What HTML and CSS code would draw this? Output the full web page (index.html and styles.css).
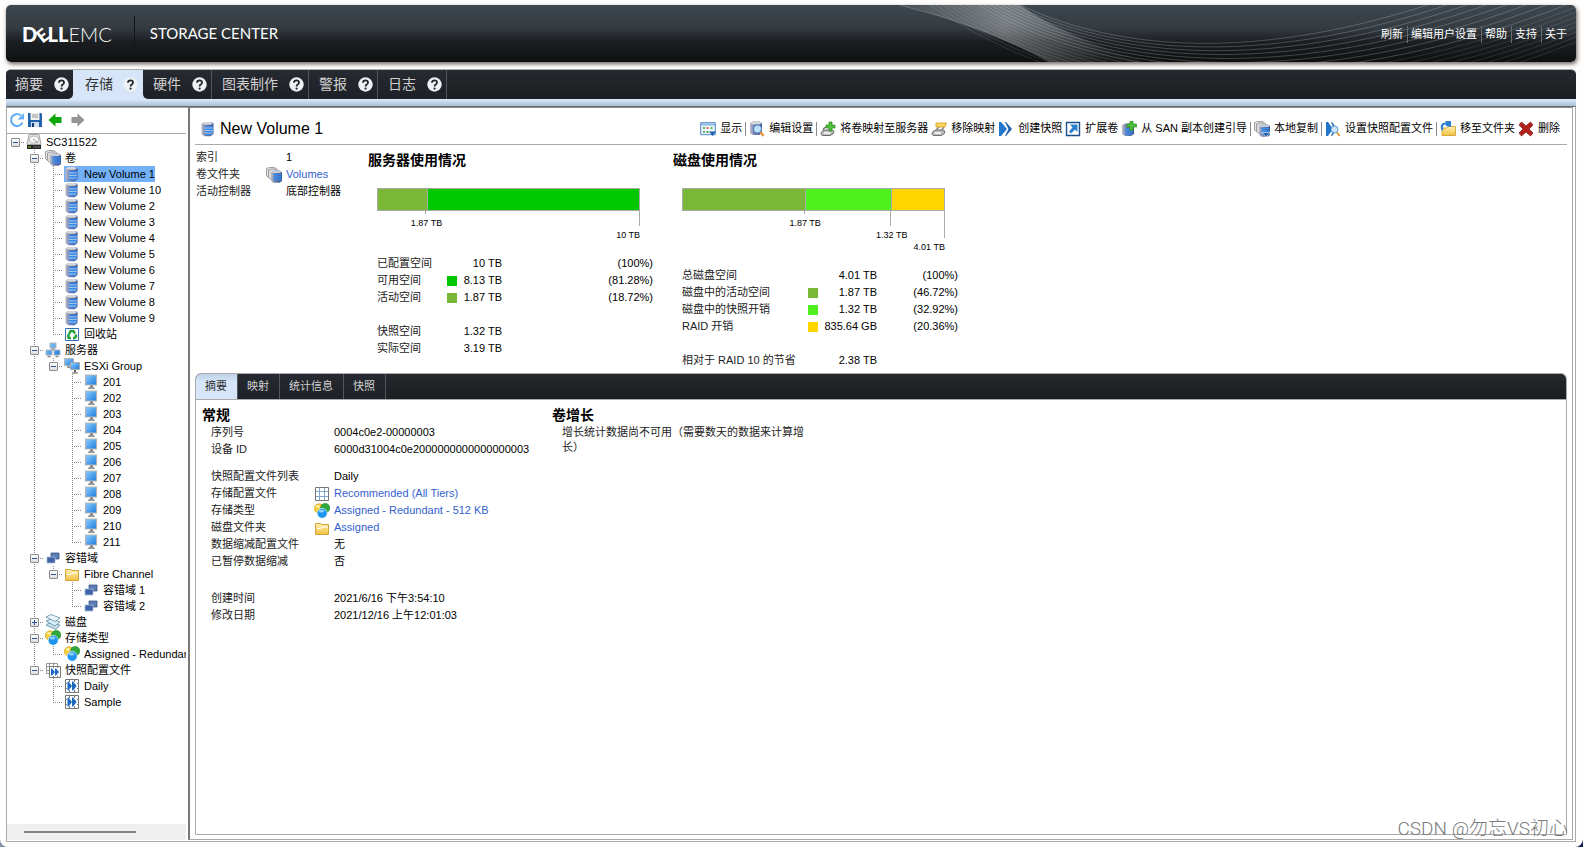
FILE: index.html
```html
<!DOCTYPE html>
<html lang="zh-CN">
<head>
    <meta charset="UTF-8">
    <meta name="viewport" content="width=device-width, initial-scale=1.0">
    <title>Storage Center</title>
    <link rel="stylesheet" href="styles.css">
</head>
<body>

<!-- icons -->
<svg class="sprite" width="0" height="0" aria-hidden="true">
    <defs>
        <linearGradient id="gBlue" x1="0" y1="0" x2="1" y2="1">
            <stop offset="0" stop-color="#8fd0ff"/>
            <stop offset="1" stop-color="#1c7ae0"/>
        </linearGradient>
        <linearGradient id="gSide" x1="0" y1="0" x2="1" y2="0">
            <stop offset="0" stop-color="#b9bccb"/>
            <stop offset="0.4" stop-color="#6f7ba8"/>
            <stop offset="1" stop-color="#3d4f8c"/>
        </linearGradient>
        <linearGradient id="gFolder" x1="0" y1="0" x2="0" y2="1">
            <stop offset="0" stop-color="#fff1b0"/>
            <stop offset="1" stop-color="#f0c040"/>
        </linearGradient>
    </defs>

    <symbol id="volume" viewBox="0 0 16 16">
        <path d="M1.500 2.500l3-1.500h6l3 1v11l-3 2.200h-6l-3-2z" fill="url(#gSide)"/>
        <path d="M1.500 2.500l3-1.500h6l3 1-2.500 1.700H5z" fill="#d5d6dd"/>
        <path d="M5 5.800h8M5 8.300h8M5 10.800h8M5 13.300h7" stroke="#2f8cf5" stroke-width="1.500"/>
        <path d="M5 7h8M5 9.500h8M5 12h8" stroke="#d4e8ff" stroke-width=".7"/>
    </symbol>
    <symbol id="volumes" viewBox="0 0 16 16">
        <path d="M.5 1.500l3-1h5l2 1.500v9h-7l-3-2z" fill="#e4e4e4" stroke="#8d8d8d" stroke-width=".8"/>
        <path d="M2.500 3l3-1h5l2 1.500v9H5l-2.500-2z" fill="#dcdcdc" stroke="#8d8d8d" stroke-width=".8"/>
        <path d="M5 5l2.500-1.500h6L16 5v9l-2.500 1.700h-6L5 14z" fill="url(#gSide)"/>
        <path d="M5 5l2.500-1.500h6L16 5l-2 1H7z" fill="#c9cbd8"/>
        <path d="M7.500 7.500h8M7.500 10h8M7.500 12.500h8" stroke="#2f8cf5" stroke-width="1.500"/>
    </symbol>
    <symbol id="controller" viewBox="0 0 16 16">
        <path d="M3 .5h10l2 10H1z" fill="#e6e6e6" stroke="#a5a5a5"/>
        <ellipse cx="8" cy="5.500" rx="4.500" ry="3.500" fill="#f8f8f8" stroke="#b5b5b5"/>
        <path d="M7 5l5 4" stroke="#999"/>
        <path d="M1 11h14v4H1z" fill="#222"/>
        <path d="M2 13h3" stroke="#7fd820"/>
        <path d="M7 13h7" stroke="#777"/>
    </symbol>
    <symbol id="recycle" viewBox="0 0 16 16">
        <path d="M1.500 2.500h13v12h-13z" fill="#fff" stroke="#3170b5"/>
        <path d="M5 8l1.800-3h2.500l1.700 2.500" fill="none" stroke="#1fa038" stroke-width="2.400"/>
        <path d="M11.700 8.500l.3 2-1.500 1.500H9M7 12H4.800L4 10l1-2" fill="none" stroke="#1fa038" stroke-width="2.400"/>
    </symbol>
    <symbol id="monitor" viewBox="0 0 16 16">
        <path d="M2.500 1h11v10h-11z" fill="url(#gBlue)" stroke="#b3b3b3" stroke-width="1.200"/>
        <path d="M7 11.500h3V13H7z" fill="#777"/>
        <path d="M4.500 15h7.500l-1-2H6z" fill="#999"/>
    </symbol>
    <symbol id="monitors" viewBox="0 0 16 16">
        <path d="M.5.5h9v7h-9z" fill="url(#gBlue)" stroke="#b3b3b3"/>
        <path d="M3 9h5" stroke="#999" stroke-width="2"/>
        <path d="M6.500 4.500h9v7h-9z" fill="url(#gBlue)" stroke="#a9a9a9"/>
        <path d="M10 12h2v3h-2z" fill="#666"/>
        <path d="M8 15h6" stroke="#999" stroke-width="1.500"/>
    </symbol>
    <symbol id="servers" viewBox="0 0 16 16">
        <path d="M5 1h6v5H5zM1 8h6v5H1zM9 8h6v5H9z" fill="url(#gBlue)" stroke="#b0b4bb"/>
        <path d="M6.500 7.200h3M2.500 14.500h3M10.500 14.500h3" stroke="#888" stroke-width="1.500"/>
    </symbol>
    <symbol id="domain" viewBox="0 0 16 16">
        <path d="M6 3h8v6H6z" fill="#5d7db5" stroke="#3a5486" stroke-width=".8"/>
        <path d="M2 7h8v6H2z" fill="#3f62a3" stroke="#a9bbd8" stroke-width=".8"/>
    </symbol>
    <symbol id="folder" viewBox="0 0 16 16">
        <path d="M1.500 3.500h5l1.500 1h6.500v10h-13z" fill="url(#gFolder)" stroke="#d3a23a"/>
        <path d="M3 8.500h4l1-1.500h5.500" fill="none" stroke="#fff"/>
    </symbol>
    <symbol id="disks" viewBox="0 0 16 16">
        <path d="M1 11l4-2.500 10 2.500-4 4.500z" fill="#c4dfea" stroke="#5b8da5" stroke-width=".8"/>
        <path d="M1 7l5-2 9 3-5 4z" fill="#d8edf5" stroke="#5b8da5" stroke-width=".8"/>
        <path d="M1 3l5-2.500L15 4l-5 3.500z" fill="#eef8fc" stroke="#5b8da5" stroke-width=".8"/>
    </symbol>
    <symbol id="types" viewBox="0 0 16 16">
        <circle cx="5" cy="5.500" r="4.700" fill="#f5cf38" stroke="#c49c1c" stroke-width=".6"/>
        <circle cx="11.200" cy="5" r="4.600" fill="#2fa83a" stroke="#1b7d26" stroke-width=".6"/>
        <circle cx="8.200" cy="10.300" r="5" fill="#1d95f0" stroke="#fff" stroke-width=".6"/>
        <ellipse cx="7.500" cy="8" rx="2.800" ry="1.600" fill="#8fd0ff"/>
        <ellipse cx="4" cy="3.500" rx="2" ry="1.200" fill="#fff0a8"/>
    </symbol>
    <symbol id="snapshot" viewBox="0 0 16 16">
        <path d="M1.500 1.500h13v13h-13z" fill="#fff" stroke="#777"/>
        <path d="M5.500 1v3M10.500 1v3M5.500 12v3M10.500 12v3M1 5.500h2M1 10.500h2M13 5.500h2M13 10.500h2" stroke="#777"/>
        <path d="M3.500 3.500h1L8 8l-3.500 4.500h-1zM8 3.500h1L12.700 8 9 12.500H8z" fill="#1c69bf"/>
    </symbol>
    <symbol id="snapshots" viewBox="0 0 16 16">
        <path d="M1.500 1.500h11v10h-11zM1 4.500h4M4.500.5v4M8.500.5v4M1 8.500h3" fill="#fff" stroke="#999"/>
        <path d="M4.500 4.500h11v11h-11z" fill="#fff" stroke="#777"/>
        <path d="M8.500 4v2M12.500 4v2M8.500 14v2M12.500 14v2" stroke="#777"/>
        <path d="M6 6.500h1l3 3.500-3 3.500H6zM10 6.500h1l3 3.500-3 3.500h-1z" fill="#1c69bf"/>
    </symbol>
    <symbol id="grid" viewBox="0 0 16 16">
        <path d="M1.500 1.500h13v13h-13z" fill="#fff" stroke="#777"/>
        <path d="M2 5.500h12M2 10.500h12M5.500 2v12M10.500 2v12" stroke="#7fa6cc"/>
    </symbol>
    <symbol id="refresh" viewBox="0 0 16 16">
        <path d="M13.500 10.500A6 6 0 1 1 12 3.500" fill="none" stroke="#68b1f5" stroke-width="2.200"/>
        <path d="M15 1v6.500H8.500z" fill="#68b1f5"/>
    </symbol>
    <symbol id="save" viewBox="0 0 16 16">
        <path d="M1 1h13l1 1v13H1z" fill="#2262ac"/>
        <path d="M3.500 1h9v7h-9z" fill="#f0f0f0"/>
        <path d="M5 3h6M5 5h6" stroke="#999"/>
        <path d="M4 10h8v5H4z" fill="#cfe0f5"/>
        <path d="M5 11h2v4H5z" fill="#12386b"/>
    </symbol>
    <symbol id="left" viewBox="0 0 16 16">
        <path d="M1.500 8L8.500 1.500V5h6v6h-6v3.500z" fill="#0ca80c"/>
    </symbol>
    <symbol id="right" viewBox="0 0 16 16">
        <path d="M14.500 8L7.500 1.500V5h-6v6h6v3.500z" fill="#949494"/>
    </symbol>
    <symbol id="show" viewBox="0 0 16 16">
        <path d="M.7 1.700h14.600v12H.7z" fill="#eef5fc" stroke="#4a86c5"/>
        <path d="M1 3.500h14" stroke="#8db7e2" stroke-width="2"/>
        <path d="M3 6h2v2H3zM10.500 6h2v2h-2zM3 10h2v2H3z" fill="#5eb95e"/>
        <path d="M6.500 6h2v2h-2z" fill="#e06a4a"/>
        <path d="M6.500 10h2v2h-2z" fill="#4fa14f"/>
        <path d="M9 10.500h7L12.500 15z" fill="#1d5fa8"/>
    </symbol>
    <symbol id="edit" viewBox="0 0 16 16">
        <path d="M1 2l3-1.500h6L13 2v10l-3 2H4l-3-2z" fill="url(#gSide)"/>
        <path d="M1 2l3-1.500h6L13 2l-2 1.500H4z" fill="#d5d6dd"/>
        <circle cx="8.500" cy="8" r="4" fill="#bfe0fb" stroke="#4a86c5" stroke-width="1.200"/>
        <path d="M11.500 11l3 4" stroke="#e8953a" stroke-width="2.200"/>
    </symbol>
    <symbol id="map" viewBox="0 0 16 16">
        <path d="M1 12.500Q1 10 5 9h6q3 0 3 2t-4 3.500H3q-2 0-2-2z" fill="#bdbdbd" stroke="#6d6d6d"/>
        <path d="M4 12h6" stroke="#fff" stroke-width="1.500"/>
        <path d="M3 9q1-3 5-3" fill="none" stroke="#777" stroke-width="1.500"/>
        <path d="M9 1h3v3h3v3h-3v3H9V7H6V4h3z" fill="#4cc038" stroke="#2b8a1d" stroke-width=".7"/>
    </symbol>
    <symbol id="unmap" viewBox="0 0 16 16">
        <path d="M1 12.500Q1 10 5 9h6q3 0 3 2t-4 3.500H3q-2 0-2-2z" fill="#bdbdbd" stroke="#6d6d6d"/>
        <path d="M4 12h6" stroke="#fff" stroke-width="1.500"/>
        <path d="M5 9l3-3M10 10l3-4" fill="none" stroke="#888" stroke-width="1.500"/>
        <path d="M5 2h10.500l-1.500 4H5z" fill="#fbd65c" stroke="#cf9c20" stroke-width=".8"/>
    </symbol>
    <symbol id="create" viewBox="0 0 16 16">
        <path d="M1 1h2l6 7-6 7H1z" fill="#2277cd"/>
        <path d="M7 1h1l6 7-6 7H7l3.500-7z" fill="#1d63b0"/>
    </symbol>
    <symbol id="expand" viewBox="0 0 16 16">
        <path d="M1.500 1.500h13v13h-13z" fill="#fff" stroke="#1a4f8e" stroke-width="1.400"/>
        <path d="M5 3.500h7.500V11L10 8.500 6 12.500 4 10.500l3.500-4z" fill="#2a80cf"/>
    </symbol>
    <symbol id="boot" viewBox="0 0 16 16">
        <path d="M1 4l3-1.500h6L13 4v9l-3 2H4l-3-2z" fill="url(#gSide)"/>
        <path d="M4 8h8M4 10.500h8M4 13h7" stroke="#2f8cf5" stroke-width="1.400"/>
        <path d="M9 0h3v3h3.500v3H12v3.500H9V6H6V3h3z" fill="#4cc038" stroke="#2b8a1d" stroke-width=".7"/>
    </symbol>
    <symbol id="copy" viewBox="0 0 16 16">
        <use href="#volumes"/>
        <path d="M8 11.500h8L12 16z" fill="#1d5fa8" stroke="#fff" stroke-width=".6"/>
    </symbol>
    <symbol id="setsnap" viewBox="0 0 16 16">
        <path d="M1 1h2l5 7-5 7H1z" fill="#2277cd"/>
        <path d="M6 1h1l5 7-5 7H6l3-7z" fill="#1d63b0"/>
        <circle cx="9.500" cy="8.500" r="3.500" fill="#cde6fb" stroke="#5c98d3"/>
        <path d="M12 11.500l2.500 3.500" stroke="#e8953a" stroke-width="2"/>
    </symbol>
    <symbol id="move" viewBox="0 0 16 16">
        <path d="M2 7h5l1-1.500h7.500v9H2z" fill="url(#gFolder)" stroke="#cf9c20" stroke-width=".8"/>
        <path d="M2.500 9Q0 2.500 6 2.500" fill="none" stroke="#2a80cf" stroke-width="2.200"/>
        <path d="M5.500 0H11v6L6 5z" fill="#2a80cf"/>
    </symbol>
    <symbol id="delete" viewBox="0 0 16 16">
        <path d="M3.500 1L8 5l4.500-4L15 4l-4 4 4 4-2.500 3L8 11l-4.500 4L1 12l4-4-4-4z" fill="#b3201c" stroke="#7e100e" stroke-width=".7"/>
    </symbol>
    <symbol id="help" viewBox="0 0 16 16">
        <circle cx="8" cy="8" r="7.700" fill="#eef1f3"/>
        <path d="M5.300 6.200Q5.400 3.600 8 3.600t2.700 2.300Q10.700 7.200 9.300 8 8.100 8.700 8.100 10" fill="none" stroke="#20252a" stroke-width="1.900"/>
        <circle cx="8.100" cy="12.300" r="1.200" fill="#20252a"/>
    </symbol>
</svg>

<header class="header">
    <svg class="swirl" width="690" height="57" viewBox="-20 0 690 57" aria-hidden="true">
        <defs>
            <radialGradient id="glow" gradientUnits="userSpaceOnUse" cx="100" cy="18" r="110">
                <stop offset="0" stop-color="#fff" stop-opacity=".32"/>
                <stop offset=".5" stop-color="#fff" stop-opacity=".18"/>
                <stop offset="1" stop-color="#fff" stop-opacity=".04"/>
            </radialGradient>
        </defs>
        <path d="M-6 0Q75 20 145 57H240Q155 30 114 0Z" fill="url(#glow)"/>
        <g fill="none" stroke="#dfe6ee" stroke-opacity=".24">
            <path d="M114 0C220 50 400 70 670 -60"/>
            <path d="M108 0C216 53 400 75 670 -52"/>
            <path d="M102 0C212 56 400 80 670 -44"/>
            <path d="M96 0C208 59 400 85 670 -36"/>
            <path d="M90 0C204 62 400 90 670 -28"/>
            <path d="M84 0C200 65 400 95 670 -20"/>
            <path d="M78 0C196 68 400 100 670 -12"/>
            <path d="M72 0C192 71 400 105 670 -4"/>
        </g>
        <g fill="none" stroke="#dfe6ee" stroke-opacity=".13">
            <path d="M66 0C188 74 400 110 670 2"/>
            <path d="M60 0C184 77 400 115 670 7"/>
            <path d="M54 0C180 80 400 120 670 12"/>
            <path d="M48 0C176 83 400 125 670 17"/>
            <path d="M42 0C172 86 400 130 670 22"/>
            <path d="M36 0C168 89 400 135 670 27"/>
            <path d="M30 0C164 92 400 140 670 32"/>
            <path d="M24 0C160 95 400 145 670 37"/>
        </g>
        <path d="M-6 0Q75 20 145 57" fill="none" stroke="#dfe6ee" stroke-opacity=".25"/>
    </svg>
    <div class="logo"><b>D<span class="tilt">E</span>LL</b>EMC</div>
    <div class="product">STORAGE CENTER</div>
    <nav class="user-links">
        <a href="#">刷新</a><a href="#">编辑用户设置</a><a href="#">帮助</a><a href="#">支持</a><a href="#">关于</a>
    </nav>
</header>

<nav class="tabs">
    <div class="tab before"><button>摘要</button><svg><use href="#help"/></svg></div>
    <div class="tab active"><button>存储</button><svg><use href="#help"/></svg></div>
    <div class="tab after"><button>硬件</button><svg><use href="#help"/></svg></div>
    <div class="tab"><button>图表制作</button><svg><use href="#help"/></svg></div>
    <div class="tab"><button>警报</button><svg><use href="#help"/></svg></div>
    <div class="tab"><button>日志</button><svg><use href="#help"/></svg></div>
</nav>
<div class="strip"></div>

<div class="workspace">
    <aside class="sidebar">
        <div class="side-tools">
            <button aria-label="刷新"><svg><use href="#refresh"/></svg></button>
            <button aria-label="保存"><svg><use href="#save"/></svg></button>
            <button aria-label="后退"><svg><use href="#left"/></svg></button>
            <button aria-label="前进"><svg><use href="#right"/></svg></button>
        </div>
        <div class="tree-view">
        <ul class="tree root">
            <li>
                <div class="row"><button class="toggle" aria-label="折叠"></button><a href="#"><svg><use href="#controller"/></svg>SC311522</a></div>
                <ul class="tree">
                    <li>
                        <div class="row"><button class="toggle" aria-label="折叠"></button><a href="#"><svg><use href="#volumes"/></svg>卷</a></div>
                        <ul class="tree">
                            <li><div class="row"><a href="#" class="selected"><svg><use href="#volume"/></svg>New Volume 1</a></div></li>
                            <li><div class="row"><a href="#"><svg><use href="#volume"/></svg>New Volume 10</a></div></li>
                            <li><div class="row"><a href="#"><svg><use href="#volume"/></svg>New Volume 2</a></div></li>
                            <li><div class="row"><a href="#"><svg><use href="#volume"/></svg>New Volume 3</a></div></li>
                            <li><div class="row"><a href="#"><svg><use href="#volume"/></svg>New Volume 4</a></div></li>
                            <li><div class="row"><a href="#"><svg><use href="#volume"/></svg>New Volume 5</a></div></li>
                            <li><div class="row"><a href="#"><svg><use href="#volume"/></svg>New Volume 6</a></div></li>
                            <li><div class="row"><a href="#"><svg><use href="#volume"/></svg>New Volume 7</a></div></li>
                            <li><div class="row"><a href="#"><svg><use href="#volume"/></svg>New Volume 8</a></div></li>
                            <li><div class="row"><a href="#"><svg><use href="#volume"/></svg>New Volume 9</a></div></li>
                            <li><div class="row"><a href="#"><svg><use href="#recycle"/></svg>回收站</a></div></li>
                        </ul>
                    </li>
                    <li>
                        <div class="row"><button class="toggle" aria-label="折叠"></button><a href="#"><svg><use href="#servers"/></svg>服务器</a></div>
                        <ul class="tree">
                            <li>
                                <div class="row"><button class="toggle" aria-label="折叠"></button><a href="#"><svg><use href="#monitors"/></svg>ESXi Group</a></div>
                                <ul class="tree">
                                    <li><div class="row"><a href="#"><svg><use href="#monitor"/></svg>201</a></div></li>
                                    <li><div class="row"><a href="#"><svg><use href="#monitor"/></svg>202</a></div></li>
                                    <li><div class="row"><a href="#"><svg><use href="#monitor"/></svg>203</a></div></li>
                                    <li><div class="row"><a href="#"><svg><use href="#monitor"/></svg>204</a></div></li>
                                    <li><div class="row"><a href="#"><svg><use href="#monitor"/></svg>205</a></div></li>
                                    <li><div class="row"><a href="#"><svg><use href="#monitor"/></svg>206</a></div></li>
                                    <li><div class="row"><a href="#"><svg><use href="#monitor"/></svg>207</a></div></li>
                                    <li><div class="row"><a href="#"><svg><use href="#monitor"/></svg>208</a></div></li>
                                    <li><div class="row"><a href="#"><svg><use href="#monitor"/></svg>209</a></div></li>
                                    <li><div class="row"><a href="#"><svg><use href="#monitor"/></svg>210</a></div></li>
                                    <li><div class="row"><a href="#"><svg><use href="#monitor"/></svg>211</a></div></li>
                                </ul>
                            </li>
                        </ul>
                    </li>
                    <li>
                        <div class="row"><button class="toggle" aria-label="折叠"></button><a href="#"><svg><use href="#domain"/></svg>容错域</a></div>
                        <ul class="tree">
                            <li>
                                <div class="row"><button class="toggle" aria-label="折叠"></button><a href="#"><svg><use href="#folder"/></svg>Fibre Channel</a></div>
                                <ul class="tree">
                                    <li><div class="row"><a href="#"><svg><use href="#domain"/></svg>容错域 1</a></div></li>
                                    <li><div class="row"><a href="#"><svg><use href="#domain"/></svg>容错域 2</a></div></li>
                                </ul>
                            </li>
                        </ul>
                    </li>
                    <li>
                        <div class="row"><button class="toggle closed" aria-label="展开"></button><a href="#"><svg><use href="#disks"/></svg>磁盘</a></div>
                    </li>
                    <li>
                        <div class="row"><button class="toggle" aria-label="折叠"></button><a href="#"><svg><use href="#types"/></svg>存储类型</a></div>
                        <ul class="tree">
                            <li><div class="row"><a href="#"><svg><use href="#types"/></svg>Assigned - Redundant</a></div></li>
                        </ul>
                    </li>
                    <li>
                        <div class="row"><button class="toggle" aria-label="折叠"></button><a href="#"><svg><use href="#snapshots"/></svg>快照配置文件</a></div>
                        <ul class="tree">
                            <li><div class="row"><a href="#"><svg><use href="#snapshot"/></svg>Daily</a></div></li>
                            <li><div class="row"><a href="#"><svg><use href="#snapshot"/></svg>Sample</a></div></li>
                        </ul>
                    </li>
                </ul>
            </li>
        </ul>
        </div>
        <div class="scrollbar"><div class="thumb"></div></div>
    </aside>

    <main class="main">
        <div class="title-bar">
            <h1><svg><use href="#volume"/></svg>New Volume 1</h1>
            <div class="actions">
                <button><svg><use href="#show"/></svg>显示</button>
                <span class="sep"></span>
                <button><svg><use href="#edit"/></svg>编辑设置</button>
                <span class="sep"></span>
                <button><svg><use href="#map"/></svg>将卷映射至服务器</button>
                <button><svg><use href="#unmap"/></svg>移除映射</button>
                <button><svg><use href="#create"/></svg>创建快照</button>
                <button><svg><use href="#expand"/></svg>扩展卷</button>
                <button><svg><use href="#boot"/></svg>从 SAN 副本创建引导</button>
                <span class="sep"></span>
                <button><svg><use href="#copy"/></svg>本地复制</button>
                <span class="sep"></span>
                <button><svg><use href="#setsnap"/></svg>设置快照配置文件</button>
                <span class="sep"></span>
                <button><svg><use href="#move"/></svg>移至文件夹</button>
                <button><svg><use href="#delete"/></svg>删除</button>
            </div>
        </div>

        <div class="overview">
            <table class="info">
                <tr><th>索引</th><td></td><td>1</td></tr>
                <tr><th>卷文件夹</th><td><svg><use href="#volumes"/></svg></td><td><a href="#">Volumes</a></td></tr>
                <tr><th>活动控制器</th><td></td><td>底部控制器</td></tr>
            </table>

            <section class="usage server">
                <h2>服务器使用情况</h2>
                <div class="chart">
                    <div class="bar">
                        <span class="olive" style="width: 18.72%"></span>
                        <span class="green" style="width: 81.28%"></span>
                    </div>
                    <div class="scale">
                        <div style="width: 18.72%"><i class="t1"></i><b>1.87 TB</b></div>
                        <div style="width: 81.28%"><i class="t2"></i><b>10 TB</b></div>
                    </div>
                </div>
                <table class="values">
                    <tr><th>已配置空间</th><td></td><td>10 TB</td><td>(100%)</td></tr>
                    <tr><th>可用空间</th><td><i class="swatch green"></i></td><td>8.13 TB</td><td>(81.28%)</td></tr>
                    <tr><th>活动空间</th><td><i class="swatch olive"></i></td><td>1.87 TB</td><td>(18.72%)</td></tr>
                    <tr class="gap"><td colspan="4"></td></tr>
                    <tr><th>快照空间</th><td></td><td>1.32 TB</td><td></td></tr>
                    <tr><th>实际空间</th><td></td><td>3.19 TB</td><td></td></tr>
                </table>
            </section>

            <section class="usage disk">
                <h2>磁盘使用情况</h2>
                <div class="chart">
                    <div class="bar">
                        <span class="olive" style="width: 46.72%"></span>
                        <span class="lime" style="width: 32.92%"></span>
                        <span class="gold" style="width: 20.36%"></span>
                    </div>
                    <div class="scale">
                        <div style="width: 46.72%"><i class="t1"></i><b>1.87 TB</b></div>
                        <div style="width: 32.92%"><i class="t2"></i><b>1.32 TB</b></div>
                        <div style="width: 20.36%"><i class="t3"></i><b>4.01 TB</b></div>
                    </div>
                </div>
                <table class="values">
                    <tr><th>总磁盘空间</th><td></td><td>4.01 TB</td><td>(100%)</td></tr>
                    <tr><th>磁盘中的活动空间</th><td><i class="swatch olive"></i></td><td>1.87 TB</td><td>(46.72%)</td></tr>
                    <tr><th>磁盘中的快照开销</th><td><i class="swatch lime"></i></td><td>1.32 TB</td><td>(32.92%)</td></tr>
                    <tr><th>RAID 开销</th><td><i class="swatch gold"></i></td><td>835.64 GB</td><td>(20.36%)</td></tr>
                    <tr class="gap"><td colspan="4"></td></tr>
                    <tr><th>相对于 RAID 10 的节省</th><td></td><td>2.38 TB</td><td></td></tr>
                </table>
            </section>
        </div>

        <div class="details">
            <nav class="subtabs">
                <button class="active">摘要</button><button>映射</button><button>统计信息</button><button>快照</button>
            </nav>
            <div class="panel">
                <section class="general">
                    <h2>常规</h2>
                    <table class="props">
                        <tr><th>序列号</th><td></td><td>0004c0e2-00000003</td></tr>
                        <tr><th>设备 ID</th><td></td><td>6000d31004c0e2000000000000000003</td></tr>
                        <tr class="gap small"><td colspan="3"></td></tr>
                        <tr><th>快照配置文件列表</th><td></td><td>Daily</td></tr>
                        <tr><th>存储配置文件</th><td><svg><use href="#grid"/></svg></td><td><a href="#">Recommended (All Tiers)</a></td></tr>
                        <tr><th>存储类型</th><td><svg><use href="#types"/></svg></td><td><a href="#">Assigned - Redundant - 512 KB</a></td></tr>
                        <tr><th>磁盘文件夹</th><td><svg><use href="#folder"/></svg></td><td><a href="#">Assigned</a></td></tr>
                        <tr><th>数据缩减配置文件</th><td></td><td>无</td></tr>
                        <tr><th>已暂停数据缩减</th><td></td><td>否</td></tr>
                        <tr class="gap large"><td colspan="3"></td></tr>
                        <tr><th>创建时间</th><td></td><td>2021/6/16 下午3:54:10</td></tr>
                        <tr><th>修改日期</th><td></td><td>2021/12/16 上午12:01:03</td></tr>
                    </table>
                </section>
                <section class="growth">
                    <h2>卷增长</h2>
                    <p>增长统计数据尚不可用（需要数天的数据来计算增长）</p>
                </section>
            </div>
        </div>
    </main>
</div>

<div class="watermark">CSDN @勿忘VS初心</div>
</body>
</html>
```
FILE: styles.css
```css
* {
    box-sizing: border-box;
}

html {
    background: linear-gradient(to right, #8494ac, #0c1c50);
}

body {
    margin: 0;
    min-height: 100vh;
    padding: 5px 7px 5px 6px;
    display: flex;
    flex-direction: column;
    background-color: #fffefc;
    border-radius: 0 0 8px 8px;
    font-family: "Liberation Sans", "Noto Sans CJK SC", sans-serif;
    font-size: 11px;
    line-height: 17px;
    color: #000;
}

button {
    padding: 0;
    border: none;
    background: none;
    font: inherit;
    color: inherit;
    cursor: pointer;
}

a {
    color: #3461cf;
    text-decoration: none;
}

svg {
    width: 16px;
    height: 16px;
    flex: none;
    display: block;
}

.sprite {
    position: absolute;
    width: 0;
    height: 0;
}

h1,
h2,
p {
    margin: 0;
}

h2 {
    font-size: 14px;
    line-height: 18px;
}

/* header */
.header {
    position: relative;
    display: flex;
    align-items: center;
    height: 57px;
    padding: 0 5px 0 16px;
    border-radius: 5px;
    background: linear-gradient(#3f484f, #343b41 40%, #1b1e21 65%, #0e0f10);
    box-shadow: 1px 2px 4px rgba(40, 30, 30, 0.7);
    color: #fff;
    flex: none;
}

.swirl {
    position: absolute;
    right: 0;
    top: 0;
    width: 690px;
    height: 57px;
    border-radius: 0 5px 5px 0;
}

.logo {
    padding-right: 22px;
    border-right: 1px solid #14171a;
    font-family: Lato, sans-serif;
    font-size: 20px;
    font-weight: 300;
    line-height: 36px;
}

.logo b {
    font-weight: 900;
}

.tilt {
    display: inline-block;
    transform: rotate(-38deg);
    font-size: 18px;
    line-height: 18px;
}

.product {
    padding-left: 15px;
    font-family: Lato, sans-serif;
    font-size: 15px;
}

.user-links {
    display: flex;
    padding-top: 2px;
    margin-left: auto;
    z-index: 1;
}

.user-links a {
    padding: 0 4px 0 3px;
    color: #fff;
}

.user-links a + a {
    border-left: 1px solid #666c70;
}

/* main tabs */
.tabs {
    display: flex;
    height: 30px;
    margin-top: 7px;
    border-top: 1px solid #aaa;
    border-radius: 5px 5px 0 0;
    background: linear-gradient(#25292d, #1b1e21);
    overflow: hidden;
    flex: none;
}

.tab {
    display: flex;
    align-items: center;
    gap: 11px;
    padding: 0 4px 0 10px;
    border-right: 1px solid #50565b;
    background: linear-gradient(#272b31, #1d2026);
    color: #d0d0d0;
    font-size: 14px;
}

.tab svg {
    width: 15px;
    height: 15px;
}

.tab.before {
    padding-left: 9px;
    border-right: none;
    border-radius: 0 0 5px 0;
}

.tab.active {
    padding: 0 5px 0 12px;
    gap: 10px;
    border: none;
    background: #d6e6f8;
    color: #333;
    box-shadow: -5px 0 0 #d6e6f8, 5px 0 0 #d6e6f8;
}

.tab.before,
.tab.after {
    z-index: 1;
}

.tab.after {
    border-radius: 0 0 0 5px;
}

.strip {
    height: 7px;
    background: linear-gradient(#dce9fa, #a9bfd6);
    flex: none;
}

/* workspace */
.workspace {
    display: flex;
    flex: 1;
    padding: 0 2px 1px 0;
    border: 1px solid #aaa;
    border-top-color: #6c6c6c;
    background: #fff;
}

.sidebar {
    display: flex;
    flex-direction: column;
    width: 181px;
    padding-right: 2px;
    flex: none;
    border-top: 1px solid #aaa;
}

.side-tools {
    display: flex;
    align-items: center;
    gap: 4px;
    height: 26px;
    padding: 0 2px 1px;
    border-bottom: 1px solid #aaa;
}

.side-tools button:nth-child(2) {
    margin-left: -2px;
}

.side-tools button:nth-child(4) {
    margin-left: 3px;
}

.tree-view {
    overflow: hidden;
}

.tree {
    margin: 0;
    padding: 0 0 0 19px;
    list-style: none;
    line-height: 16px;
    white-space: nowrap;
}

.tree.root {
    padding: 0;
}

.tree li {
    background: repeating-linear-gradient(#888 0 1px, transparent 1px 2px) no-repeat 8px 0 / 1px 100%;
}

.tree li:last-child {
    background-size: 1px 9px;
}

.tree.root > li {
    background: none;
}

.row {
    display: flex;
    align-items: center;
    height: 16px;
    padding-left: 19px;
    background: repeating-linear-gradient(to right, #888 0 1px, transparent 1px 2px) no-repeat 8px 8px / 10px 1px;
}

.row a {
    display: flex;
    gap: 4px;
    color: #000;
}

.row a.selected {
    background: #72b1f8;
}

.toggle {
    width: 9px;
    height: 9px;
    margin: 0 6px 0 -15px;
    border: 1px solid #8b8b8b;
    border-radius: 1px;
    background: linear-gradient(#2b4fa8, #2b4fa8) no-repeat center / 5px 1px, linear-gradient(#fff, #ddd);
    flex: none;
}

.toggle.closed {
    background: linear-gradient(#2b4fa8, #2b4fa8) no-repeat center / 5px 1px,
        linear-gradient(#2b4fa8, #2b4fa8) no-repeat center / 1px 5px, linear-gradient(#fff, #ddd);
}

.scrollbar {
    margin-top: auto;
    padding: 7px 50px 7px 17px;
    background: #efefef;
}

.thumb {
    height: 2px;
    background: #868686;
}

/* volume page */
.main {
    display: flex;
    flex-direction: column;
    flex: 1;
    min-width: 0;
    padding: 0 5px 4px;
    border: 1px solid #aaa;
    border-top-color: #888;
    border-left: 2px solid #777;
}

.title-bar {
    display: flex;
    align-items: center;
    justify-content: space-between;
    height: 37px;
    padding: 5px 7px 0 5px;
    border-bottom: 1px solid #aaa;
}

h1 {
    display: flex;
    align-items: center;
    gap: 4px;
    font-size: 16px;
    font-weight: normal;
    white-space: nowrap;
}

.actions {
    display: flex;
    align-items: center;
    gap: 3px;
    white-space: nowrap;
}

.actions button {
    display: flex;
    align-items: center;
    gap: 4px;
}

.sep {
    width: 1px;
    height: 14px;
    background: #888;
}

.overview {
    display: flex;
    align-items: flex-start;
    padding: 4px 0 4px 1px;
}

table {
    border-collapse: collapse;
    table-layout: fixed;
}

th,
td {
    height: 17px;
    padding: 0;
    text-align: left;
    font-weight: normal;
    white-space: nowrap;
}

th {
    color: #222;
}

.info {
    width: 172px;
}

.info th {
    width: 70px;
}

.info td:nth-child(2) {
    width: 20px;
}

.usage {
    width: 305px;
}

.usage h2 {
    margin-top: 2px;
}

.chart {
    width: 263px;
    margin: 19px 0 14px 9px;
}

.bar {
    display: flex;
    height: 23px;
    border: 1px solid #aaa;
}

.bar span + span {
    border-left: 1px solid #aaa;
}

.olive {
    background: #79b737;
}

.green {
    background: #00c800;
}

.lime {
    background: #50f01e;
}

.gold {
    background: #ffd500;
}

.scale {
    display: flex;
    align-items: flex-start;
    font-size: 9px;
    line-height: 12px;
}

.scale div {
    display: flex;
    flex-direction: column;
    align-items: flex-end;
}

.scale i {
    width: 1px;
    background: #aaa;
}

.scale b {
    margin: 3px -16px 0 0;
    font-weight: normal;
}

.scale div:last-child b {
    margin-right: 0;
}

.t1 {
    height: 3px;
}

.t2 {
    height: 15px;
}

.t3 {
    height: 27px;
}

.values {
    width: 276px;
    margin-left: 9px;
}

.values th {
    width: 70px;
}

.values td:nth-child(2) {
    width: 10px;
}

.values td:nth-child(3) {
    width: 45px;
    text-align: right;
}

.values td:nth-child(4) {
    text-align: right;
}

.disk .values th {
    width: 126px;
}

.disk .values td:nth-child(3) {
    width: 59px;
}

.swatch {
    display: block;
    width: 10px;
    height: 10px;
}

/* lower tabs */
.details {
    display: flex;
    flex-direction: column;
    flex: 1;
    border: 1px solid #aaa;
    border-radius: 6px 6px 0 0;
    overflow: hidden;
}

.subtabs {
    display: flex;
    height: 26px;
    border-bottom: 1px solid #aaa;
    background: linear-gradient(#25292d, #1b1e21);
}

.subtabs button {
    padding: 0 10px 0 9px;
    border-right: 1px solid #50565b;
    background: linear-gradient(#272b31, #1d2026);
    color: #d0d0d0;
}

.subtabs button.active {
    background: linear-gradient(#bdd0e6, #d6e6f8 30%);
    color: #333;
}

.panel {
    display: flex;
    padding: 6px;
}

.general {
    width: 350px;
}

.props {
    margin-left: 9px;
    width: 330px;
}

.props th {
    width: 103px;
}

.props td:nth-child(2) {
    width: 20px;
}

.props .small td {
    height: 10px;
}

.props .large td {
    height: 20px;
}

.growth p {
    width: 262px;
    padding: 1px 0 0 10px;
    line-height: 15px;
    color: #222;
}

.growth {
    min-width: 0;
}

.watermark {
    position: absolute;
    right: 15px;
    bottom: 6px;
    font-family: Roboto, "Noto Sans CJK SC", sans-serif;
    font-size: 19px;
    font-weight: 300;
    line-height: 24px;
    color: #7c7c7c;
}
```
